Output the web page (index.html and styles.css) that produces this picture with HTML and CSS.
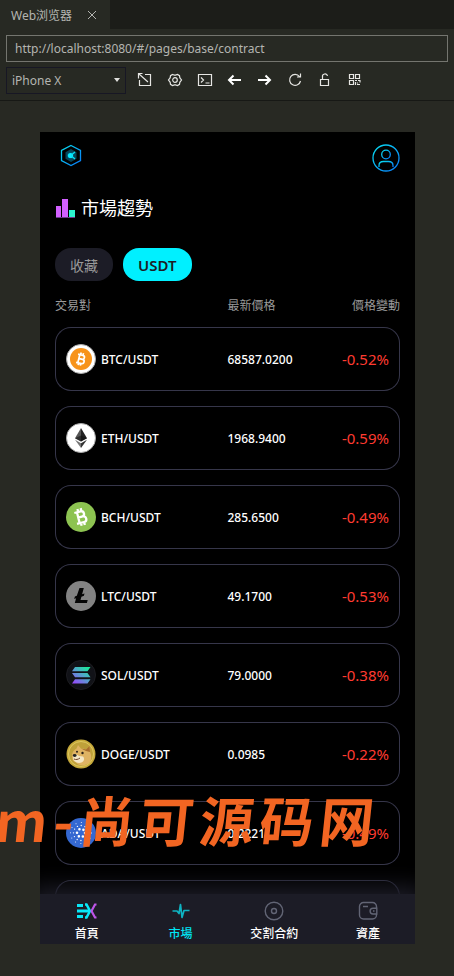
FILE: index.html
```html
<!DOCTYPE html>
<html lang="zh-Hant">
<head>
<meta charset="utf-8">
<meta name="viewport" content="width=device-width, initial-scale=1">
<title>Web浏览器</title>
<link rel="stylesheet" href="styles.css">
</head>
<body>
<svg class="defs" width="0" height="0" aria-hidden="true">
  <defs>
    <linearGradient id="cyanBlue" x1="0" y1="0" x2="1" y2="1"><stop offset="0" stop-color="#08e0f0"/><stop offset="1" stop-color="#0878f8"/></linearGradient>
    <linearGradient id="solana" gradientUnits="userSpaceOnUse" x1="22" y1="6" x2="8" y2="24"><stop offset="0" stop-color="#14f195"/><stop offset=".45" stop-color="#50a8c8"/><stop offset="1" stop-color="#9945ff"/></linearGradient>
  </defs>
</svg>

<div class="tabs">
  <div class="tab"><span>Web浏览器</span>
    <button class="tab-close" aria-label="Close"><svg width="10" height="10" viewBox="0 0 10 10"><path d="M1 1l8 8M9 1l-8 8" stroke="#b4b5b1" fill="none"/></svg></button>
  </div>
</div>

<div class="toolbar">
  <input class="address" type="text" aria-label="URL" value="http://localhost:8080/#/pages/base/contract">
  <div class="tools">
    <div class="device-pick">
      <select aria-label="Device"><option>iPhone X</option></select>
    </div>
    <button aria-label="Open"><svg viewBox="0 0 16 16"><path d="M8 2.500h5.500v11h-11V8M2 2l9 8M1.500 6.500v-5h4" /></svg></button>
    <button aria-label="Settings"><svg viewBox="0 0 16 16"><path d="M5.500 2.500l2 .6h1l2-.6 2 1.200.3 2 .7 1 1 1.300-1 1.300-.7 1-.3 2-2 1.200-2-.6h-1l-2 .6-2-1.200-.3-2-.7-1-1-1.300 1-1.300.7-1 .3-2z"/><circle cx="8" cy="8" r="2.300"/></svg></button>
    <button aria-label="Console"><svg viewBox="0 0 16 16"><path d="M1.500 2.500h13v11h-13zM4 5.500L6.500 8 4 10.500M8.500 11h4"/></svg></button>
    <button aria-label="Back"><svg class="bold" viewBox="0 0 16 16"><path d="M2.500 8H14M6.500 3.500L2 8l4.500 4.500"/></svg></button>
    <button aria-label="Forward"><svg class="bold" viewBox="0 0 16 16"><path d="M1 8h11.500M8.500 3.500L13 8l-4.500 4.500"/></svg></button>
    <button aria-label="Reload"><svg viewBox="0 0 16 16"><path d="M12.500 4.500A5.500 5.500 0 1 0 13.500 9M10 5h3.500V1.500"/></svg></button>
    <button aria-label="Lock"><svg viewBox="0 0 16 16"><path d="M3.500 7.500h8v6h-8zM5.500 7V5a2.500 2.500 0 0 1 5-1"/></svg></button>
    <button aria-label="QR code"><svg viewBox="0 0 16 16"><path d="M2.500 2.500h4v4h-4zM8.500 2.500h4v4h-4zM2.500 8.500h4v4h-4zM8 8.500h2M11 8.500h2v2M8.500 10v3M10.500 10.500v1M10 12.500h3"/></svg></button>
  </div>
</div>

<div class="stage">
  <div class="phone">
    <main class="screen">
      <header class="top">
        <a href="#" aria-label="Home"><svg width="22" height="24" viewBox="0 0 22 24"><path d="M11 1.500l9.500 5v10L11 21.500 1.500 16.500V6.500z" fill="none" stroke="url(#cyanBlue)" stroke-width="1.300"/><path d="M11 5l5.500 3.200v6.600L11 18l-5.500-3.200V8.200z" fill="#064457"/><path d="M10 8.500a3 3 0 1 0 1 5.800l4 1.200-2.500-4L15 7.500l-4 1.300z" fill="#075f76"/><circle cx="10.500" cy="11.500" r="2.600" fill="#08eaff"/><path d="M11 11.500l4-3.500M11 11.500l4 3.500" stroke="#08dff4" stroke-width="1.200"/></svg></a>
        <a href="#" aria-label="Profile"><svg width="28" height="28" viewBox="0 0 28 28" fill="none" stroke="url(#cyanBlue)" stroke-width="1.300"><circle cx="14" cy="14" r="13"/><circle cx="14" cy="10.500" r="4.300"/><path d="M7 23v-1.500c0-2.600 2-4 4.500-4h5c2.500 0 4.500 1.400 4.500 4V23"/></svg></a>
      </header>

      <h1 class="title"><svg width="21" height="21" viewBox="0 0 21 21"><path d="M1 8h5v11H1zM7 1h6v18H7z" fill="#d260ff"/><path d="M14 12h6v7h-6z" fill="#2cf5cf"/><path d="M1 19.500h19" stroke="#6a3a8a"/></svg>市場趨勢</h1>

      <div class="pills">
        <button class="pill">收藏</button>
        <button class="pill active">USDT</button>
      </div>

      <table class="market">
        <thead><tr><th>交易對</th><th>最新價格</th><th>價格變動</th></tr></thead>
        <tbody>
          <tr><td><div class="coin"><svg viewBox="0 0 30 30"><circle cx="15" cy="15" r="14.500" fill="#fff" stroke="#aaa"/><circle cx="15" cy="15" r="11" fill="#f7931a"/><g transform="rotate(14 15 15)" fill="none" stroke="#fff" stroke-width="1.700"><path d="M11 11h5a2 2 0 0 1 0 4h-3.500 4a2.200 2.200 0 0 1 0 4.400H11M12.800 11v8.400M13.700 8.700V11M16 8.700V11M13.700 19.400v2.200M16 19.400v2.200"/></g></svg>BTC/USDT</div></td><td>68587.0200</td><td>-0.52%</td></tr>
          <tr><td><div class="coin"><svg viewBox="0 0 30 30"><circle cx="15" cy="15" r="14.500" fill="#fff" stroke="#aaa"/><path d="M15 5l-6 10.200 6 3.300z" fill="#555"/><path d="M15 5l6 10.200-6 3.300z" fill="#222"/><path d="M9 15.200l6-2.700 6 2.700-6 3.300z" fill="#111" opacity=".6"/><path d="M9 16.800l6 3.400V25z" fill="#777"/><path d="M21 16.800l-6 3.400V25z" fill="#333"/></svg>ETH/USDT</div></td><td>1968.9400</td><td>-0.59%</td></tr>
          <tr><td><div class="coin"><svg viewBox="0 0 30 30"><circle cx="15" cy="15" r="15" fill="#8dc351"/><g transform="rotate(-14 15 15)" fill="none" stroke="#fff" stroke-width="2.300"><path d="M9.500 9.500H16a2.700 2.700 0 0 1 0 5.400h-4 4.800a2.800 2.800 0 0 1 0 5.700H9.500M12.200 9.500v11M13.500 6.300v3.200M16.800 6.300v3.200M13.500 20.500v3.200M16.800 20.500v3.200"/></g></svg>BCH/USDT</div></td><td>285.6500</td><td>-0.49%</td></tr>
          <tr><td><div class="coin"><svg viewBox="0 0 30 30"><circle cx="15" cy="15" r="15" fill="#838383"/><path d="M13.500 7h4.300l-1.700 6.300 2.400-.9-.6 2.400-2.500 1-.9 3.200h7.200l-.8 3H8.800l1.300-4.700-1.900.7.7-2.500 1.900-.7z" fill="#050505"/></svg>LTC/USDT</div></td><td>49.1700</td><td>-0.53%</td></tr>
          <tr><td><div class="coin"><svg viewBox="0 0 30 30"><circle cx="15" cy="15" r="14.500" fill="#111217" stroke="#1c1c20"/><path d="M9 7h15.500l-3 4.200H6zM6 13h15.500l3 4.200H9zM9 19.200h15.500l-3 4.200H6z" fill="url(#solana)"/></svg>SOL/USDT</div></td><td>79.0000</td><td>-0.38%</td></tr>
          <tr><td><div class="coin"><svg viewBox="0 0 30 30"><circle cx="15" cy="15" r="14.500" fill="#c5a83a"/><circle cx="15" cy="15" r="12.500" fill="#bfa13a" stroke="#dec95f"/><path d="M6 17c0-4 2-6 4.500-7.500L12 6l3 3.500c2 0 3.500.5 5 1L23.500 7l.5 6c2 4 1.500 8-1 11-5 3.500-10 3-13-.5-3-1-4-3-4-6.500z" fill="#dfb363"/><path d="M7 17c2-2 4-2 6 0l4 .5c2 2 1 5-1.500 6-3 1-6 0-8-2.500z" fill="#f4e7c5"/><path d="M15 9.500l5 1 3.500-3.500.5 6-4-1z" fill="#a96e2d"/><ellipse cx="8.700" cy="16.500" rx="1.900" ry="1.400" fill="#222"/><circle cx="11" cy="12.800" r="1" fill="#2a2118"/><circle cx="16.500" cy="14" r="1.200" fill="#2a2118"/><path d="M8 20c2 1 4 .5 6-1" stroke="#70452d" fill="none"/></svg>DOGE/USDT</div></td><td>0.0985</td><td>-0.22%</td></tr>
          <tr><td><div class="coin"><svg viewBox="0 0 30 30"><circle cx="15" cy="15" r="15" fill="#3468d1"/><g fill="none" stroke="#fff" stroke-linecap="round"><circle cx="15" cy="15" r="4" stroke-width="2.600" stroke-dasharray="0 4.190"/><circle cx="15" cy="15" r="7.500" stroke-width="1.400" stroke-dasharray="0 3.927"/><circle cx="15" cy="15" r="10.500" stroke-width="1" stroke-dasharray="0 5.498"/></g></svg>ADA/USDT</div></td><td>0.2221</td><td>-0.49%</td></tr>
          <tr><td></td><td></td><td></td></tr>
        </tbody>
      </table>
    </main>

    <nav class="bottom">
      <a href="#"><svg width="24" height="20" viewBox="0 0 24 20"><path d="M2 4.500h6M2 10h12M2 15.500h6" stroke="#08e8f8" stroke-width="3"/><path d="M10 3.500h1.500L15 10l-3.500 6.500H10" fill="none" stroke="#08e8f8" stroke-width="2.500"/><path d="M21.500 3.500h-1.500L16.500 10l3.500 6.500h1.500" fill="none" stroke="#bd55e8" stroke-width="2.200"/></svg>首頁</a>
      <a href="#" class="current"><svg width="20" height="20" viewBox="0 0 20 20" fill="none" stroke="#0eb4c2" stroke-width="1.700" stroke-linejoin="round"><path d="M1.500 10H6l2 2.500L9.500 3.500l1.500 13L13 9.500h5.500"/></svg>市場</a>
      <a href="#"><svg width="20" height="20" viewBox="0 0 20 20" fill="none" stroke="#626575" stroke-width="1.400"><circle cx="10" cy="10" r="8.800"/><circle cx="10" cy="10" r="2.500"/></svg>交割合約</a>
      <a href="#"><svg width="20" height="20" viewBox="0 0 20 20" fill="none" stroke="#626575" stroke-width="1.400"><path d="M18.500 7V5.500a4 4 0 0 0-4-4h-9a4 4 0 0 0-4 4v8.500a4 4 0 0 0 4 4h9a4 4 0 0 0 4-4V13M5 5.500h5M18.800 7.200H15a2.900 2.900 0 0 0 0 5.800h3.800zM15 10h1.500"/></svg>資產</a>
    </nav>
  </div>
</div>

<div class="watermark"><span>m</span><span>-</span><span>尚</span><span>可</span><span>源</span><span>码</span><span>网</span></div>
</body>
</html>
```

FILE: styles.css
```css
* { box-sizing: border-box; }

body {
  position: relative;
  margin: 0;
  height: 100vh;
  overflow: hidden;
  display: flex;
  flex-direction: column;
  background: #282923;
  color: #fff;
  font-family: "Noto Sans", "Noto Sans CJK SC", sans-serif;
  font-size: 12px;
}

button, input, select { font: inherit; color: inherit; }
button { padding: 0; border: 0; background: none; }
a { color: inherit; text-decoration: none; }
.defs { position: absolute; }

.tabs {
  display: flex;
  height: 29px;
  background: #1c1d19;
}
.tab {
  display: flex;
  align-items: center;
  gap: 15px;
  padding: 0 13px 0 11px;
  background: #272923;
  color: #b4b5b1;
}
.tab-close { display: flex; }

.toolbar {
  padding: 6px;
  background: #272923;
  border-bottom: 1px solid #171815;
  color: #b4b5b1;
}
.address {
  display: block;
  width: 100%;
  height: 27px;
  padding: 0 8px;
  border: 1px solid #74756f;
  background: none;
}
.tools {
  display: flex;
  align-items: center;
  margin-top: 5px;
}
.tools button {
  display: flex;
  justify-content: center;
  width: 30px;
  padding-bottom: 1px;
}
.tools svg {
  width: 16px;
  height: 16px;
  fill: none;
  stroke: #e6e6e3;
  stroke-width: 1.2;
}
.tools svg.bold { stroke: #fff; stroke-width: 2; }
.device-pick {
  position: relative;
  width: 120px;
  margin-right: 4px;
}
.device-pick select {
  display: block;
  width: 100%;
  height: 27px;
  padding: 0 5px;
  border: 1px solid #171724;
  border-radius: 0;
  background: none;
  appearance: none;
}
.device-pick::after {
  content: "";
  position: absolute;
  right: 6px;
  top: 11px;
  border: 3px solid transparent;
  border-top: 4px solid #e0e0dd;
}

.stage {
  flex: 1;
  min-height: 0;
  display: flex;
  padding: 31px 39px 32px 40px;
}
.phone {
  flex: 1;
  display: flex;
  flex-direction: column;
  overflow: hidden;
  background: #000;
  font-family: "Noto Sans", "Noto Sans CJK TC", sans-serif;
}
.screen {
  flex: 1;
  min-height: 0;
  overflow: hidden;
  padding: 12px 15px 0;
}
.top {
  display: flex;
  justify-content: space-between;
  align-items: flex-start;
  padding-left: 5px;
}
.top svg { display: block; }
.title {
  display: flex;
  align-items: center;
  gap: 5px;
  margin: 22px 0 0;
  font-size: 18px;
  font-weight: 400;
  line-height: 28px;
}
.pills {
  display: flex;
  gap: 10px;
  margin-top: 26px;
}
.pill {
  height: 33px;
  padding: 0 15px;
  border-radius: 16px;
  background: #1c1c26;
  color: #999;
  font-size: 14px;
}
.pill.active {
  background: #00f0ff;
  color: #1c1c26;
  font-size: 15px;
  font-weight: 600;
}

.market {
  width: 100%;
  table-layout: fixed;
  border-spacing: 0 15px;
  border-collapse: separate;
}
.market th {
  padding: 4px 0 0;
  text-align: left;
  color: #999;
  font-weight: 400;
  line-height: 12px;
}
.market th:first-child { width: 50%; }
.market th:last-child { text-align: right; }
.market td {
  height: 64px;
  padding: 0;
  border: solid #36364a;
  border-width: 1px 0;
  font-weight: 500;
}
.market td:first-child {
  padding-left: 10px;
  border-left-width: 1px;
  border-radius: 16px 0 0 16px;
}
.market td:last-child {
  padding-right: 10px;
  border-right-width: 1px;
  border-radius: 0 16px 16px 0;
  color: #ff3b30;
  font-size: 15px;
  font-weight: 400;
  text-align: right;
}
.coin {
  display: flex;
  align-items: center;
  gap: 5px;
}
.coin svg { width: 30px; height: 30px; }

.bottom {
  position: relative;
  display: flex;
  height: 50px;
  background: #1c1c26;
  box-shadow: 0 0 20px 8px #1c1c26;
  font-weight: 500;
}
.bottom a {
  flex: 1;
  display: flex;
  flex-direction: column;
  align-items: center;
  gap: 5px;
  padding-top: 7px;
  line-height: 16px;
}
.bottom .current { color: #00e5f5; }

.watermark {
  position: absolute;
  left: -4px;
  top: 789px;
  display: flex;
  gap: 6px;
  color: #f26522;
  font-family: "Noto Sans CJK SC", sans-serif;
  font-size: 54px;
  font-weight: 700;
  line-height: 60px;
  white-space: nowrap;
  pointer-events: none;
  transform: skewX(-6deg);
}
```
